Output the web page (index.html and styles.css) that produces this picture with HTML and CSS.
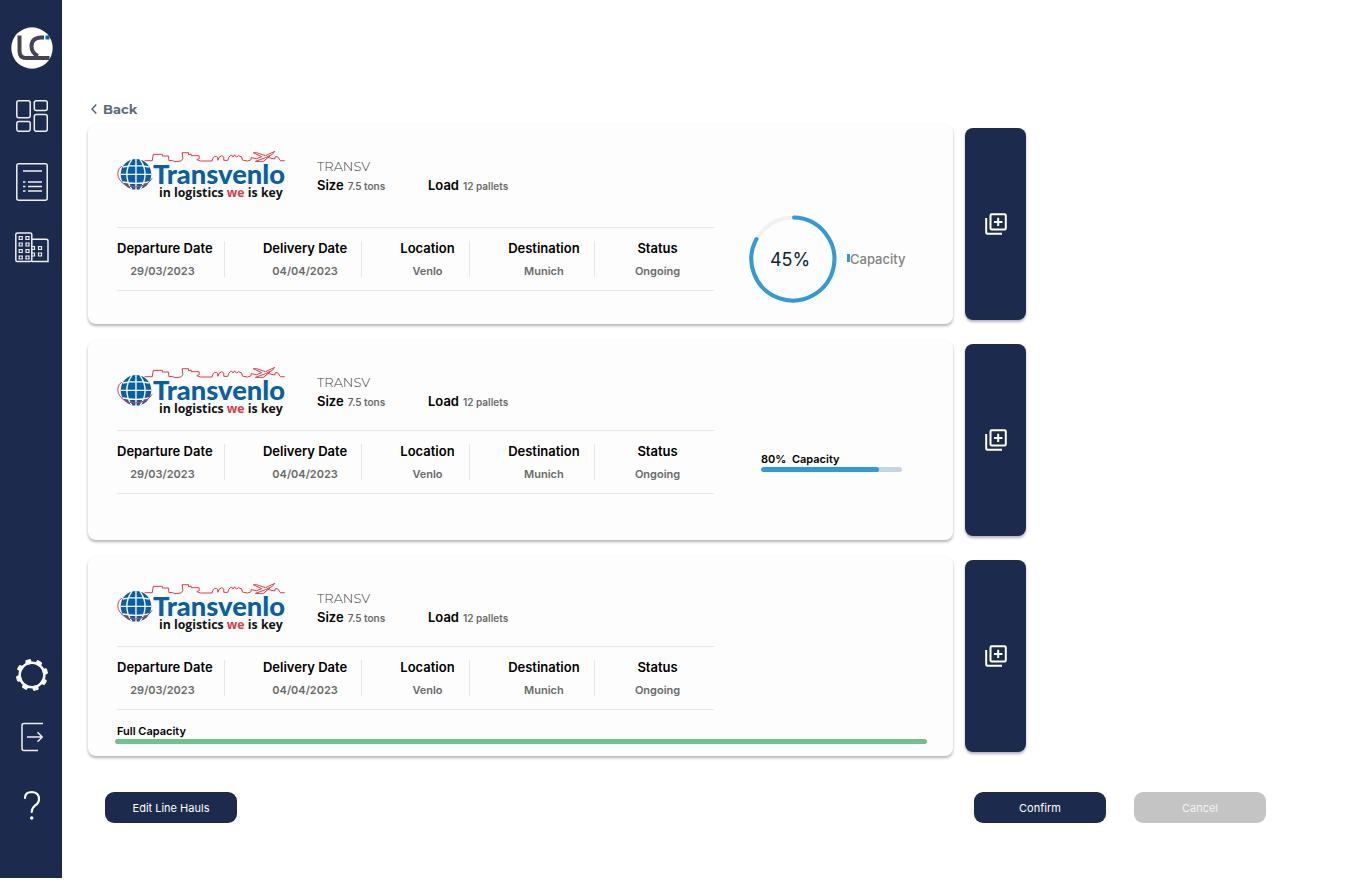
FILE: index.html
```html
<!DOCTYPE html>
<html lang="en">
<head>
<meta charset="utf-8">
<title>Line hauls</title>
<link rel="stylesheet" href="styles.css">
</head>
<body>
<svg class="defs" aria-hidden="true">
  <symbol id="carrier-art" viewBox="110 180 508 150">
    <path d="M193 212H216L219 193H246L247 198H265L266 212L276 211L284 215L302 213L308 206L306 188H325V194L333 192V197H357V206L350 209L361 213H396Q398 198 408 199Q415 199 413 211Q416 197 425 197Q434 198 431 211H443L446 201L454 195L459 201L463 194L469 201L476 197L485 201L487 210L502 213L513 209V203L530 206L545 200L520 188H530L556 197L584 184L577 193L556 203L526 214H550L571 197M562 202L584 207L586 200H593L601 212H614" fill="none" stroke="#e73946" stroke-width="3"/>
    <circle cx="167" cy="253" r="46" fill="#0560a9"/>
    <path d="M167 206V300M121 253H213M128 231Q167 223 206 231M128 276Q167 284 206 276M155 207Q124 253 155 299M179 207Q210 253 179 299" fill="none" stroke="#fdfdfd" stroke-width="4"/>
    <path d="M124 228Q108 241 114 262Q127 291 164 291Q203 289 216 264" fill="none" stroke="#e73946" stroke-width="3"/>
  </symbol>
  <symbol id="add-copy" viewBox="0 0 22 22">
    <rect x="5.5" y="1.2" width="15.3" height="15.3" rx="1.2" fill="none" stroke="#fff" stroke-width="2"/>
    <path d="M1.2 5V19.5Q1.2 20.8 2.5 20.8H17M13.2 4.8V13M9 8.9H17.4" fill="none" stroke="#fff" stroke-width="2"/>
  </symbol>
</svg>

<nav class="sidebar" aria-label="Main">
  <a href="#" class="nav-link" aria-label="Home">
    <svg width="42" height="42" viewBox="0 0 42 42"><circle cx="21" cy="21" r="20.7" fill="#fff"/><path d="M8.500 8.500V24Q8.500 31 15 31H38.500" fill="none" stroke="#464354" stroke-width="4"/><path d="M33 10.500H30Q20.500 11 20.500 19Q20.500 26 27 29" fill="none" stroke="#464354" stroke-width="4"/><rect x="34.500" y="8.500" width="4" height="4" fill="#0860b4"/></svg>
  </a>
  <a href="#" class="nav-link" aria-label="Dashboard">
    <svg width="32" height="32" viewBox="0 0 32 32" class="line"><rect x=".8" y=".8" width="13.400" height="17" rx="2"/><rect x="18.300" y=".8" width="13" height="9.800" rx="2"/><rect x=".8" y="21.500" width="13.400" height="9.800" rx="2"/><rect x="18.300" y="14.500" width="13" height="16.800" rx="2"/></svg>
  </a>
  <a href="#" class="nav-link" aria-label="Orders">
    <svg width="32" height="38" viewBox="0 0 32 38" class="line"><rect x=".8" y=".8" width="30.400" height="36.400" rx="2"/><path d="M7 8H26M7 19H9.500M12 19H26M7 23.500H9.500M12 23.500H26M7 28H9.500M12 28H26"/></svg>
  </a>
  <a href="#" class="nav-link" aria-label="Companies">
    <svg width="34" height="31" viewBox="0 0 34 31" class="line"><rect x=".8" y="1" width="16" height="28.500" rx="1.500"/><path d="M17 7.300H31Q33 7.300 33 9V29.500H17"/><g stroke-width="1.200"><path d="M4.200 4.500h3v3h-3zM11 4.500h3v3h-3zM4.200 11h3v3h-3zM11 11h3v3h-3zM4.200 17.500h3v3h-3zM11 17.500h3v3h-3zM4.200 24h3v3h-3zM11 24h3v3h-3zM17 14.500h2.500v3H17M23.500 14.500h3v3h-3zM17 21h2.500v3H17M23.500 21h3v3h-3z"/></g></svg>
  </a>
  <a href="#" class="nav-link nav-end" aria-label="Settings">
    <svg width="32" height="32" viewBox="-16 -16 32 32"><circle r="12.300" fill="none" stroke="#f7f7f9" stroke-width="2.600"/><g fill="#f7f7f9" transform="rotate(-15)"><g id="teeth"><rect x="-3" y="-16" width="6" height="5" rx="1.500"/><rect x="-3" y="11" width="6" height="5" rx="1.500"/><rect x="-16" y="-3" width="5" height="6" rx="1.500"/><rect x="11" y="-3" width="5" height="6" rx="1.500"/></g><use href="#teeth" transform="rotate(45)"/></g></svg>
  </a>
  <a href="#" class="nav-link" aria-label="Log out">
    <svg width="22" height="30" viewBox="0 0 22 30" class="line"><path d="M22 1.500H3Q1 1.500 1 3.500V26.500Q1 28.500 3 28.500H17M6 15H21M16.500 10.300L21.300 15L16.500 19.700"/></svg>
  </a>
  <a href="#" class="nav-link" aria-label="Help">
    <svg width="18" height="46" viewBox="0 0 18 46"><path d="M2 15Q2 9 9 9Q16 9.500 16 16Q16 20 12 22.500Q9 25 8.700 29" fill="none" stroke="#fff" stroke-width="2.200" stroke-linecap="round"/><circle cx="8.700" cy="35" r="1.700" fill="#fff"/></svg>
  </a>
</nav>

<main class="main">
  <a href="#" class="back"><svg width="6" height="10" viewBox="0 0 6 10"><path d="M5.300 .5L1 5L5.300 9.500" fill="none" stroke="#4a5a70" stroke-width="1.300"/></svg>Back</a>

  <section class="list">
    <div class="row">
      <article class="card card-roomy">
        <div class="details">
          <header class="head">
            <svg class="logo" viewBox="110 180 508 150"><use href="#carrier-art" x="110" y="180" width="508" height="150"/><text x="218" y="283" class="logo-name">Transvenlo</text><text x="236" y="322" class="logo-tag">in logistics <tspan class="logo-we">we</tspan> is key</text></svg>
            <div class="info"><p class="code">TRANSV</p><p class="specs"><span class="spec"><b>Size</b>7.5 tons</span><span class="spec"><b>Load</b>12 pallets</span></p></div>
          </header>
          <div class="facts"><table>
            <thead><tr><th>Departure Date</th><th>Delivery Date</th><th>Location</th><th>Destination</th><th>Status</th></tr></thead>
            <tbody><tr><td>29/03/2023</td><td>04/04/2023</td><td>Venlo</td><td>Munich</td><td>Ongoing</td></tr></tbody>
          </table></div>
        </div>
        <div class="ring-box">
          <div class="ring">
            <svg width="88" height="88" viewBox="0 0 88 88"><circle cx="44" cy="44" r="41.500" fill="none" stroke="#f1f1f2" stroke-width="4"/><path d="M45 2.500A41.500 41.500 0 1 1 7.500 24" fill="none" stroke="#2d9cdb" stroke-width="4" stroke-linecap="round"/></svg>
            <span class="ring-value">45%</span>
          </div>
          <span class="legend">Capacity</span>
        </div>
      </article>
      <button class="add" aria-label="Add to line haul 1"><svg width="22" height="22"><use href="#add-copy"/></svg></button>
    </div>

    <div class="row">
      <article class="card">
        <div class="details">
          <header class="head">
            <svg class="logo" viewBox="110 180 508 150"><use href="#carrier-art" x="110" y="180" width="508" height="150"/><text x="218" y="283" class="logo-name">Transvenlo</text><text x="236" y="322" class="logo-tag">in logistics <tspan class="logo-we">we</tspan> is key</text></svg>
            <div class="info"><p class="code">TRANSV</p><p class="specs"><span class="spec"><b>Size</b>7.5 tons</span><span class="spec"><b>Load</b>12 pallets</span></p></div>
          </header>
          <div class="facts"><table>
            <thead><tr><th>Departure Date</th><th>Delivery Date</th><th>Location</th><th>Destination</th><th>Status</th></tr></thead>
            <tbody><tr><td>29/03/2023</td><td>04/04/2023</td><td>Venlo</td><td>Munich</td><td>Ongoing</td></tr></tbody>
          </table></div>
        </div>
        <div class="meter">
          <p class="meter-label">80%&nbsp; Capacity</p>
          <div class="track"><div class="fill" style="width:84%"></div></div>
        </div>
      </article>
      <button class="add" aria-label="Add to line haul 2"><svg width="22" height="22"><use href="#add-copy"/></svg></button>
    </div>

    <div class="row">
      <article class="card">
        <div class="details">
          <header class="head">
            <svg class="logo" viewBox="110 180 508 150"><use href="#carrier-art" x="110" y="180" width="508" height="150"/><text x="218" y="283" class="logo-name">Transvenlo</text><text x="236" y="322" class="logo-tag">in logistics <tspan class="logo-we">we</tspan> is key</text></svg>
            <div class="info"><p class="code">TRANSV</p><p class="specs"><span class="spec"><b>Size</b>7.5 tons</span><span class="spec"><b>Load</b>12 pallets</span></p></div>
          </header>
          <div class="facts"><table>
            <thead><tr><th>Departure Date</th><th>Delivery Date</th><th>Location</th><th>Destination</th><th>Status</th></tr></thead>
            <tbody><tr><td>29/03/2023</td><td>04/04/2023</td><td>Venlo</td><td>Munich</td><td>Ongoing</td></tr></tbody>
          </table></div>
        </div>
        <div class="full">
          <p class="meter-label">Full Capacity</p>
          <div class="full-bar"></div>
        </div>
      </article>
      <button class="add" aria-label="Add to line haul 3"><svg width="22" height="22"><use href="#add-copy"/></svg></button>
    </div>
  </section>

  <footer class="actions">
    <button class="btn">Edit Line Hauls</button>
    <button class="btn btn-confirm">Confirm</button>
    <button class="btn btn-muted">Cancel</button>
  </footer>
</main>
</body>
</html>
```

FILE: styles.css
```css
* { box-sizing: border-box; }

body {
  margin: 0;
  min-height: 100vh;
  display: flex;
  background: #fff;
  color: #000;
  font-family: Inter, "Liberation Sans", sans-serif;
}

p { margin: 0; }
svg { display: block; }
button { border: 0; padding: 0; font-family: inherit; cursor: pointer; }
.defs { position: absolute; width: 0; height: 0; }

.sidebar {
  flex: none;
  width: 62px;
  margin-bottom: 2px;
  padding: 27px 0 49px 2px;
  display: flex;
  flex-direction: column;
  align-items: center;
  gap: 31px;
  background: #1c2a4e;
}
.nav-end { margin-top: auto; }
.line { fill: none; stroke: #eef0f4; stroke-width: 1.5px; }

.main { flex: 1; min-width: 0; padding: 101px 94px 56px 26px; }

.back {
  display: flex;
  align-items: center;
  gap: 6px;
  width: max-content;
  margin-left: 3px;
  font: 700 13px/16px Montserrat, Inter, sans-serif;
  color: #5c6a7e;
  text-decoration: none;
}

.list {
  display: flex;
  flex-direction: column;
  gap: 16px;
  max-width: 938px;
  margin-top: 7px;
}
.row { display: flex; align-items: center; gap: 12px; }

.card {
  flex: 1;
  min-width: 0;
  min-height: 200px;
  padding: 26px 26px 10px 29px;
  display: flex;
  flex-wrap: wrap;
  align-content: flex-start;
  border-radius: 8px;
  background: #fdfdfd;
  box-shadow: 0 2px 3px rgba(0, 0, 0, .3);
}
.details { flex: 0 1 597px; }

.head { display: flex; gap: 31px; height: 52px; margin-bottom: 12px; }
.card-roomy .head { margin-bottom: 25px; }
.logo { width: 169px; height: 50px; overflow: visible; }
.logo-name { font: 900 82px Lato, sans-serif; fill: #0560a9; }
.logo-tag { font: 700 37px "Open Sans", sans-serif; fill: #111; }
.logo-tag .logo-we { fill: #e73946; }

.info { padding-top: 7px; }
.code { margin-bottom: 1px; font: 300 13px/18px Montserrat, "Open Sans", sans-serif; color: #444; }
.specs { display: flex; font-size: 10px; line-height: 18px; font-weight: 600; color: #6a6a6a; }
.spec { min-width: 111px; }
.spec b { margin-right: 4px; font-size: 13px; font-weight: 600; color: #000; }

.facts { padding: 13px 0; border: solid #e6e7eb; border-width: 1px 0; }
table { width: 100%; table-layout: fixed; border-collapse: collapse; }
th, td { padding: 0 0 0 24px; border-right: 1px solid #e6e7eb; text-align: center; white-space: nowrap; }
th { font-size: 13px; line-height: 14px; font-weight: 600; width: 18%; }
td { padding-top: 10px; font-size: 11px; line-height: 12px; font-weight: 600; color: #6a6a6a; }
th:nth-child(2) { width: 23%; }
th:nth-child(4) { width: 21%; }
th:nth-child(5) { width: 20%; }
th:first-child, td:first-child { padding-left: 0; padding-right: 16px; }
th:last-child, td:last-child { padding-left: 6px; border-right: 0; }

.ring-box { display: flex; align-items: center; margin: 65px 0 0 35px; height: 88px; }
.ring { display: grid; place-items: center; }
.ring > * { grid-area: 1 / 1; }
.ring-value { padding-right: 6px; font-size: 18px; color: #0b2434; }
.legend { display: flex; align-items: center; margin-left: 10px; font-size: 13px; font-weight: 500; color: #828282; }
.legend::before { content: ""; width: 3px; height: 8px; margin-bottom: 2px; background: #2d9cdb; }

.meter { width: 141px; margin: 85px 0 0 47px; }
.meter-label { font-size: 11px; line-height: 16px; font-weight: 600; }
.track { height: 5px; border-radius: 3px; background: #c7d3e3; overflow: hidden; }
.fill { height: 100%; border-radius: 3px; background: #2d9cdb; }

.full { width: 100%; margin-top: 13px; }
.full-bar { height: 5px; margin-left: -2px; border-radius: 3px; background: #6fc28f; }

.add {
  flex: none;
  width: 61px;
  height: 192px;
  display: grid;
  place-items: center;
  border-radius: 8px;
  background: #1c2a4e;
  box-shadow: 0 2px 3px rgba(0, 0, 0, .3);
}

.actions { display: flex; gap: 28px; margin: 36px 0 0 17px; }
.btn {
  width: 132px;
  height: 31px;
  border-radius: 9px;
  background: #1c2a4e;
  color: #fff;
  font-size: 11px;
}
.btn-confirm { margin-left: auto; }
.btn-muted { background: #c4c4c4; color: #f2f2f2; }
```
